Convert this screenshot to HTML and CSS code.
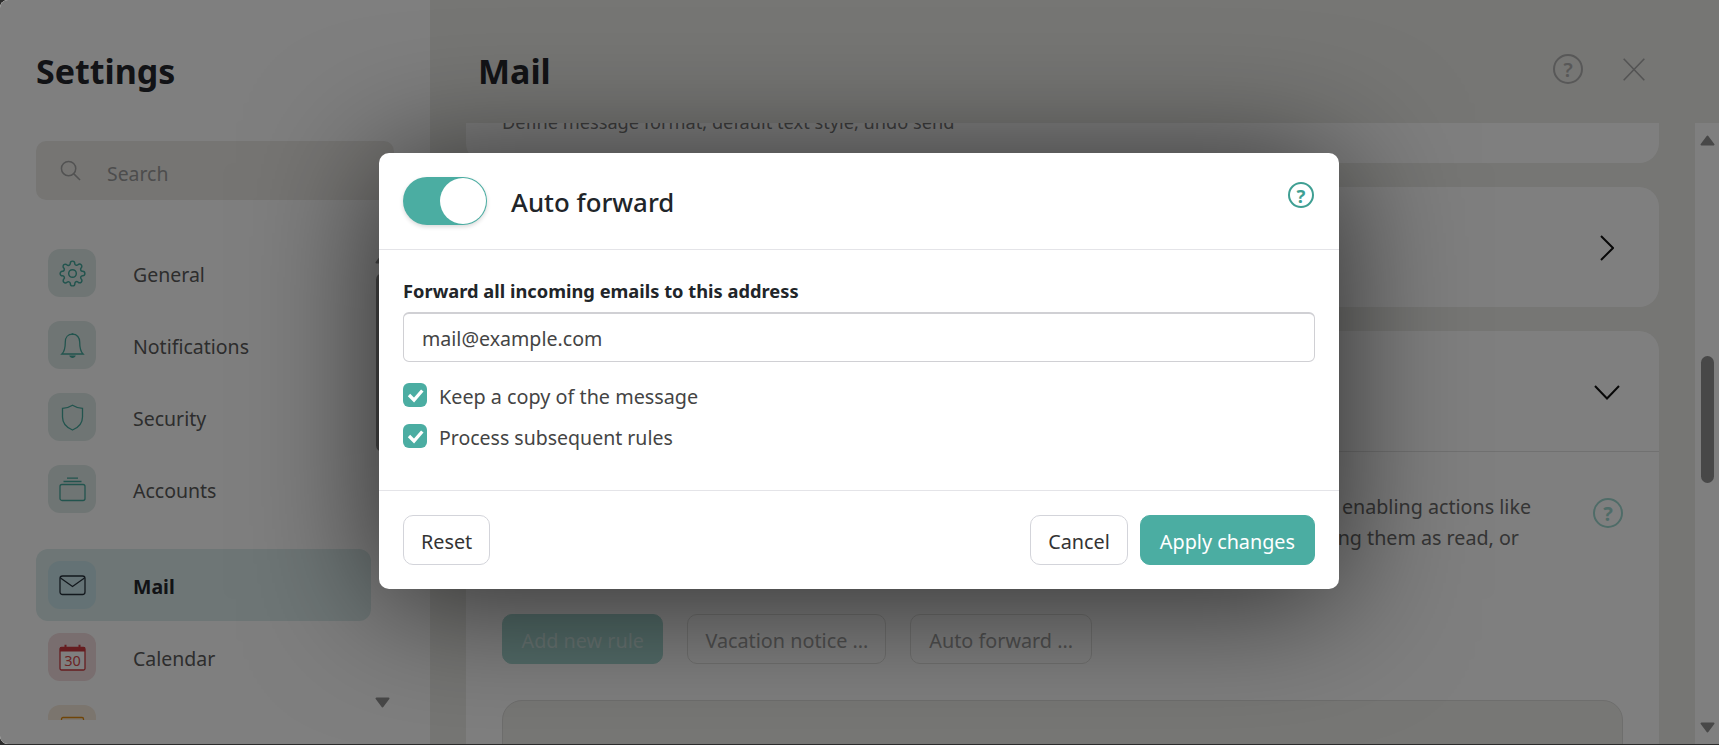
FILE: index.html
```html
<!DOCTYPE html>
<html lang="en">
<head>
<meta charset="utf-8">
<title>Settings</title>
<link rel="stylesheet" href="styles.css">
</head>
<body>
<div class="app">
  <aside class="sidebar">
    <h1 class="page-title side-title">Settings</h1>
    <div class="search">
      <svg class="search-icon" viewBox="0 0 22 22"><circle cx="9" cy="9" r="7.500"/><path d="M14.500 14.500 21 21"/></svg>
      <span class="search-text">Search</span>
    </div>
    <div class="side-body">
      <nav class="nav">
        <div class="nav-group">
          <div class="nav-item"><span class="nav-icon"><svg viewBox="0 0 24 24" class="ico teal"><circle cx="12" cy="12" r="3.400"/><path d="M19.400 15a1.650 1.650 0 0 0 .33 1.820l.06.06a2 2 0 0 1 0 2.830 2 2 0 0 1-2.830 0l-.06-.06a1.650 1.650 0 0 0-1.820-.33 1.650 1.650 0 0 0-1 1.510V21a2 2 0 0 1-2 2 2 2 0 0 1-2-2v-.09A1.650 1.650 0 0 0 9 19.400a1.650 1.650 0 0 0-1.820.33l-.06.06a2 2 0 0 1-2.830 0 2 2 0 0 1 0-2.830l.06-.06a1.650 1.650 0 0 0 .33-1.820 1.650 1.650 0 0 0-1.510-1H3a2 2 0 0 1-2-2 2 2 0 0 1 2-2h.09A1.650 1.650 0 0 0 4.600 9a1.650 1.650 0 0 0-.33-1.820l-.06-.06a2 2 0 0 1 0-2.830 2 2 0 0 1 2.830 0l.06.06a1.650 1.650 0 0 0 1.820.33H9a1.650 1.650 0 0 0 1-1.510V3a2 2 0 0 1 2-2 2 2 0 0 1 2 2v.09a1.650 1.650 0 0 0 1 1.510 1.650 1.650 0 0 0 1.820-.33l.06-.06a2 2 0 0 1 2.830 0 2 2 0 0 1 0 2.830l-.06.06a1.650 1.650 0 0 0-.33 1.820V9a1.650 1.650 0 0 0 1.510 1H21a2 2 0 0 1 2 2 2 2 0 0 1-2 2h-.09a1.650 1.650 0 0 0-1.510 1z"/></svg></span><span class="nav-label">General</span></div>
          <div class="nav-item"><span class="nav-icon"><svg viewBox="0 0 27 27" class="ico teal"><path d="M13.500 2.200c-4.600 0-7.200 3.400-7.200 7.800 0 5.600-.6 9.400-3.400 12h21.200c-2.800-2.600-3.400-6.400-3.400-12 0-4.400-2.600-7.800-7.200-7.800z"/><path class="solid" d="M10.200 23.600h6.600c-.4 1.500-1.800 2.400-3.300 2.400s-2.900-.9-3.300-2.400zM12.600 1.200h1.800v1.800h-1.800z"/></svg></span><span class="nav-label">Notifications</span></div>
          <div class="nav-item"><span class="nav-icon"><svg viewBox="0 0 27 27" class="ico teal"><path d="M13.500 1.200c2.800 1.800 6 2.900 10 3.200v8.600c0 5.600-3.600 10.400-10 13-6.400-2.600-10-7.400-10-13V4.400c4-.3 7.200-1.400 10-3.200z"/></svg></span><span class="nav-label">Security</span></div>
          <div class="nav-item"><span class="nav-icon"><svg viewBox="0 0 27 27" class="ico teal"><rect x="1" y="8.500" width="25" height="16" rx="2"/><path d="M4.500 5.500h18M8 2.200h11"/></svg></span><span class="nav-label">Accounts</span></div>
        </div>
        <div class="nav-group">
          <div class="nav-item active"><span class="nav-icon mail-icon"><svg viewBox="0 0 27 27" class="ico dark"><rect x="1" y="4" width="25" height="18.500" rx="2.500"/><path d="M1.500 6 13.500 14.500 25.500 6"/></svg></span><span class="nav-label">Mail</span></div>
          <div class="nav-item"><span class="nav-icon cal-icon"><svg viewBox="0 0 27 27" class="ico red"><rect class="cal-page" x="1" y="3.500" width="25" height="22.500" rx="1.500"/><path class="solid" d="M1 3h25v4.500H1zM5.500 .8h2v3h-2zM19.500 .8h2v3h-2z"/><text x="13.500" y="22" class="cal-num">30</text></svg></span><span class="nav-label">Calendar</span></div>
          <div class="nav-item"><span class="nav-icon tasks-icon"><svg viewBox="0 0 27 27" class="ico orange"><rect x="2.500" y="1.500" width="22" height="22" rx="1.500"/></svg></span><span class="nav-label">Tasks</span></div>
        </div>
      </nav>
      <div class="side-scroll">
        <svg class="arrow" viewBox="0 0 15 11"><path d="M7.500 1.500 13.500 9.500H1.500z"/></svg>
        <span class="side-thumb"></span>
        <svg class="arrow arrow-end" viewBox="0 0 15 11"><path d="M1.500 1.500H13.500L7.500 9.500z"/></svg>
      </div>
    </div>
  </aside>

  <main class="main">
    <header class="main-head">
      <h1 class="page-title">Mail</h1>
      <div class="head-actions">
        <span class="help help-head">?</span>
        <svg class="close-x" viewBox="0 0 22 23"><path d="M.7.700 21.300 22.300M21.300.700.7 22.300"/></svg>
      </div>
    </header>
    <div class="main-body">
      <div class="scroller">
        <section class="card card-first"><p class="card-sub">Define message format, default text style, undo send</p></section>
        <section class="card card-row">
          <svg class="chev-right" viewBox="0 0 14 26"><path d="M1 1 13 13 1 25"/></svg>
        </section>
        <section class="card">
          <div class="card-row card-head">
            <svg class="chev-down" viewBox="0 0 26 15"><path d="M1 1 13 13.500 25 1"/></svg>
          </div>
          <div class="card-content">
            <div class="rule-intro">
              <p class="rule-text"><span class="rule-line">Automatically sort your incoming messages by applying your own rules, enabling actions like</span><span class="rule-line rule-line-b">moving messages to a specific folder, deleting them, marking them as read, or</span></p>
              <span class="help help-rule">?</span>
            </div>
            <div class="rule-btns">
              <span class="chip chip-primary">Add new rule</span>
              <span class="chip">Vacation notice ...</span>
              <span class="chip chip-auto">Auto forward ...</span>
            </div>
            <div class="rule-box"></div>
          </div>
        </section>
      </div>
      <div class="main-scroll">
        <svg class="arrow" viewBox="0 0 15 11"><path d="M7.500 1.500 13.500 9.500H1.500z"/></svg>
        <span class="main-thumb"></span>
        <svg class="arrow arrow-end" viewBox="0 0 15 11"><path d="M1.500 1.500H13.500L7.500 9.500z"/></svg>
      </div>
    </div>
  </main>

  <div class="overlay">
    <div class="modal">
      <div class="modal-head">
        <span class="toggle"><span class="knob"></span></span>
        <h2 class="modal-title">Auto forward</h2>
        <span class="help help-modal">?</span>
      </div>
      <div class="modal-body">
        <label class="field-label" for="fwd">Forward all incoming emails to this address</label>
        <input class="field" id="fwd" type="text" value="mail@example.com" readonly>
        <div class="checks">
          <div class="check"><span class="box"><svg viewBox="0 0 24 24"><path d="M6 12l5 5 8.300-9.500"/></svg></span><span class="check-text">Keep a copy of the message</span></div>
          <div class="check"><span class="box"><svg viewBox="0 0 24 24"><path d="M6 12l5 5 8.300-9.500"/></svg></span><span class="check-text check-text-b">Process subsequent rules</span></div>
        </div>
      </div>
      <div class="modal-foot">
        <button class="btn btn-reset" type="button">Reset</button>
        <div class="foot-right">
          <button class="btn btn-cancel" type="button">Cancel</button>
          <button class="btn btn-apply" type="button">Apply changes</button>
        </div>
      </div>
    </div>
  </div>
</div>
</body>
</html>
```
FILE: styles.css
```css
* { box-sizing: border-box; }
html, body { margin: 0; height: 100%; overflow: hidden; }
body {
  background: #2b2b2b;
  font-family: "Noto Sans", "Open Sans", sans-serif;
  font-size: 19.800px;
  color: #5a5a5a;
}
.app {
  position: relative;
  display: flex;
  width: 100%;
  height: 744px;
  overflow: hidden;
  border-radius: 8px 0 0 8px;
  background: #ecece8;
}

/* sidebar */
.sidebar {
  width: 430px;
  flex: none;
  padding: 48px 0 0 36px;
  background: #fff;
  display: flex;
  flex-direction: column;
}
.page-title {
  margin: 0;
  font-size: 34px;
  line-height: 46px;
  font-weight: 700;
  color: #25272c;
}
.search {
  margin-top: 47px;
  width: 358px;
  height: 59px;
  padding-left: 24px;
  display: flex;
  align-items: center;
  gap: 26px;
  border-radius: 10px;
  background: #ecebe7;
  color: #9a9a9a;
  font-size: 19.400px;
}
.search-text { padding-top: 6px; }
.search-icon { width: 21px; height: 21px; fill: none; stroke: #a4a4a4; stroke-width: 1.600; }
.side-body { margin-top: 37px; display: flex; gap: 4px; height: 483px; }
.nav { width: 335px; overflow: hidden; height: 483px; display: flex; flex-direction: column; gap: 24px; font-size: 19.500px; }
.nav-item {
  height: 72px;
  flex: none;
  padding-left: 12px;
  display: flex;
  align-items: center;
  gap: 37px;
  border-radius: 12px;
}
.nav-label { padding-top: 3px; }
.nav-icon {
  width: 48px;
  height: 48px;
  flex: none;
  border-radius: 12px;
  background: #dfeae8;
  display: flex;
  align-items: center;
  justify-content: center;
}
.ico { width: 27px; height: 27px; fill: none; stroke-width: 1.300; }
.ico.teal { stroke: #44a89c; }
.ico.dark { stroke: #25303a; }
.ico.red { stroke: #cc3a40; }
.ico.orange { stroke: #e08a10; }
.ico .solid { stroke: none; }
.ico.teal .solid { fill: #44a89c; }
.ico.red .solid { fill: #cc3a40; }
.cal-page { fill: #fff; }
.cal-num { font-size: 14.500px; fill: #d84a4a; stroke: none; text-anchor: middle; }
.nav-item.active { background: #dcedec; font-weight: 700; color: #25272c; }
.mail-icon { background: #c8e4ea; }
.cal-icon { background: #f2dcde; }
.tasks-icon { background: #f6eadc; }
.side-scroll {
  width: 15px;
  margin-top: 16px;
  margin-bottom: 12px;
  display: flex;
  flex-direction: column;
  align-items: center;
}
.arrow { width: 15px; height: 11px; flex: none; fill: #909090; stroke: #909090; stroke-width: 2; stroke-linejoin: round; }
.arrow-end { margin-top: auto; }
.side-thumb { width: 13px; height: 179px; margin-top: 9px; border-radius: 7px; background: #909090; }

/* main */
.main { flex: 1; min-width: 0; display: flex; flex-direction: column; }
.main-head {
  height: 123px;
  flex: none;
  padding: 48px 74px 0 48px;
  display: flex;
  justify-content: space-between;
  align-items: flex-start;
}
.head-actions { display: flex; align-items: center; gap: 40px; margin-top: 6px; }
.help {
  display: flex;
  align-items: center;
  justify-content: center;
  border-radius: 50%;
  flex: none;
  font-weight: 700;
}
.help-head { width: 30px; height: 30px; border: 2px solid #b0b0b0; color: #b0b0b0; font-weight: 600; font-size: 20px; }
.close-x { width: 22px; height: 23px; fill: none; stroke: #a8a8a8; stroke-width: 1.600; }
.main-body { flex: 1; min-height: 0; display: flex; }
.scroller { flex: 1; min-width: 0; padding: 0 36px; overflow: hidden; }
.card { background: #fff; border-radius: 20px; overflow: hidden; margin-bottom: 24px; }
.card-first { height: 70px; margin-top: -30px; padding: 17px 36px 0; }
.card-sub { margin: 0; font-size: 18.200px; line-height: 24px; color: #7a7a7a; }
.card.card-row { height: 120px; margin-bottom: 24px; }
.card-row { display: flex; align-items: center; justify-content: flex-end; padding-right: 36px; }
.chev-right { width: 14px; height: 26px; fill: none; stroke: #111; stroke-width: 2; margin: 2px 9px 0 0; }
.card-head { height: 121px; padding-right: 39px; padding-top: 3px; border-bottom: 1px solid #e2e2e2; }
.chev-down { width: 26px; height: 15px; fill: none; stroke: #111; stroke-width: 2; }
.card-content { padding: 36px 36px 0; }
.rule-intro { display: flex; justify-content: space-between; align-items: flex-start; }
.rule-text { margin: 3px 0 0; width: 1029px; display: flex; flex-direction: column; align-items: flex-end; line-height: 31px; font-size: 19.700px; color: #6b6b6b; white-space: nowrap; }
.rule-line-b { padding-right: 12px; }
.help-rule { width: 30px; height: 30px; margin-top: 10px; border: 2px solid #9fd8d0; color: #9fd8d0; font-size: 20px; }
.rule-btns { display: flex; gap: 24px; margin-top: 61px; }
.chip {
  height: 50px;
  padding: 3px 17px 0;
  display: flex;
  align-items: center;
  border: 1px solid #e0e0de;
  border-radius: 10px;
  color: #a0a0a0;
  background: transparent;
  white-space: nowrap;
}
.chip-primary { padding: 3px 18.500px 0; background: #a6d6d0; border-color: #a6d6d0; color: #d0e8e5; }
.chip-auto { padding: 3px 18px 0; }
.rule-box { margin-top: 36px; height: 200px; border: 1px solid #dcdcda; border-radius: 20px; background: #efeeea; }
.main-scroll {
  width: 24px;
  flex: none;
  padding: 12px 0 11px;
  background: #fff;
  display: flex;
  flex-direction: column;
  align-items: center;
  height: 621px;
}
.main-thumb { width: 13px; height: 127px; margin-top: 210px; border-radius: 7px; background: #909090; }

/* modal */
.overlay {
  position: absolute;
  inset: 0;
  padding: 0 1px 2px 0;
  background: rgba(0, 0, 0, .5);
  display: flex;
  align-items: center;
  justify-content: center;
}
.modal {
  width: 960px;
  height: 436px;
  background: #fff;
  border-radius: 10px;
  box-shadow: 0 10px 130px rgba(0, 0, 0, .65);
  display: flex;
  flex-direction: column;
  color: #444;
}
.modal-head {
  height: 97px;
  flex: none;
  padding: 24px;
  border-bottom: 1px solid #e4e4e8;
  display: flex;
  align-items: flex-start;
}
.toggle { width: 84px; height: 48px; border-radius: 24px; background: #4bada2; padding: 1px 1px 1px 37px; box-shadow: 0 2px 4px rgba(0,0,0,.15); flex: none; }
.knob { display: block; width: 46px; height: 46px; border-radius: 50%; background: #fff; }
.modal-title { margin: 0 0 0 24px; padding-top: 1px; font-size: 25.800px; line-height: 48px; font-weight: 500; color: #212529; }
.help-modal { width: 26px; height: 26px; margin: 5px 1px 0 auto; border: 2px solid #3f9f93; color: #3f9f93; font-size: 18.500px; }
.modal-body { flex: 1; padding: 24px 24px 0; }
.field-label { display: block; height: 38px; font-size: 18.300px; line-height: 34px; font-weight: 700; color: #212529; }
.field {
  display: block;
  width: 100%;
  height: 50px;
  padding: 1px 18px 0;
  border: 1px solid #d0d0d4;
  border-top-width: 2px;
  border-radius: 6px;
  font: inherit;
  font-size: 19.600px;
  color: #444;
  outline: none;
}
.checks { margin-top: 21px; display: flex; flex-direction: column; gap: 17px; }
.check { display: flex; align-items: center; height: 24px; gap: 12px; }
.check-text { padding-top: 2px; }
.check-text-b { font-size: 19.500px; }
.box { width: 24px; height: 24px; border-radius: 6px; background: #4bada2; display: flex; }
.box svg { width: 24px; height: 24px; fill: none; stroke: #fff; stroke-width: 3.300; }
.modal-foot {
  height: 99px;
  flex: none;
  padding: 24px;
  border-top: 1px solid #e4e4e8;
  display: flex;
  justify-content: space-between;
}
.foot-right { display: flex; gap: 12px; }
.btn {
  height: 50px;
  padding: 2px 17px 0;
  border: 1px solid #d3d4da;
  border-radius: 10px;
  background: #fff;
  font: inherit;
  color: #333;
}
.btn-apply { padding: 2px 19px 0; background: #4bada2; border-color: #4bada2; color: #fff; }
```
